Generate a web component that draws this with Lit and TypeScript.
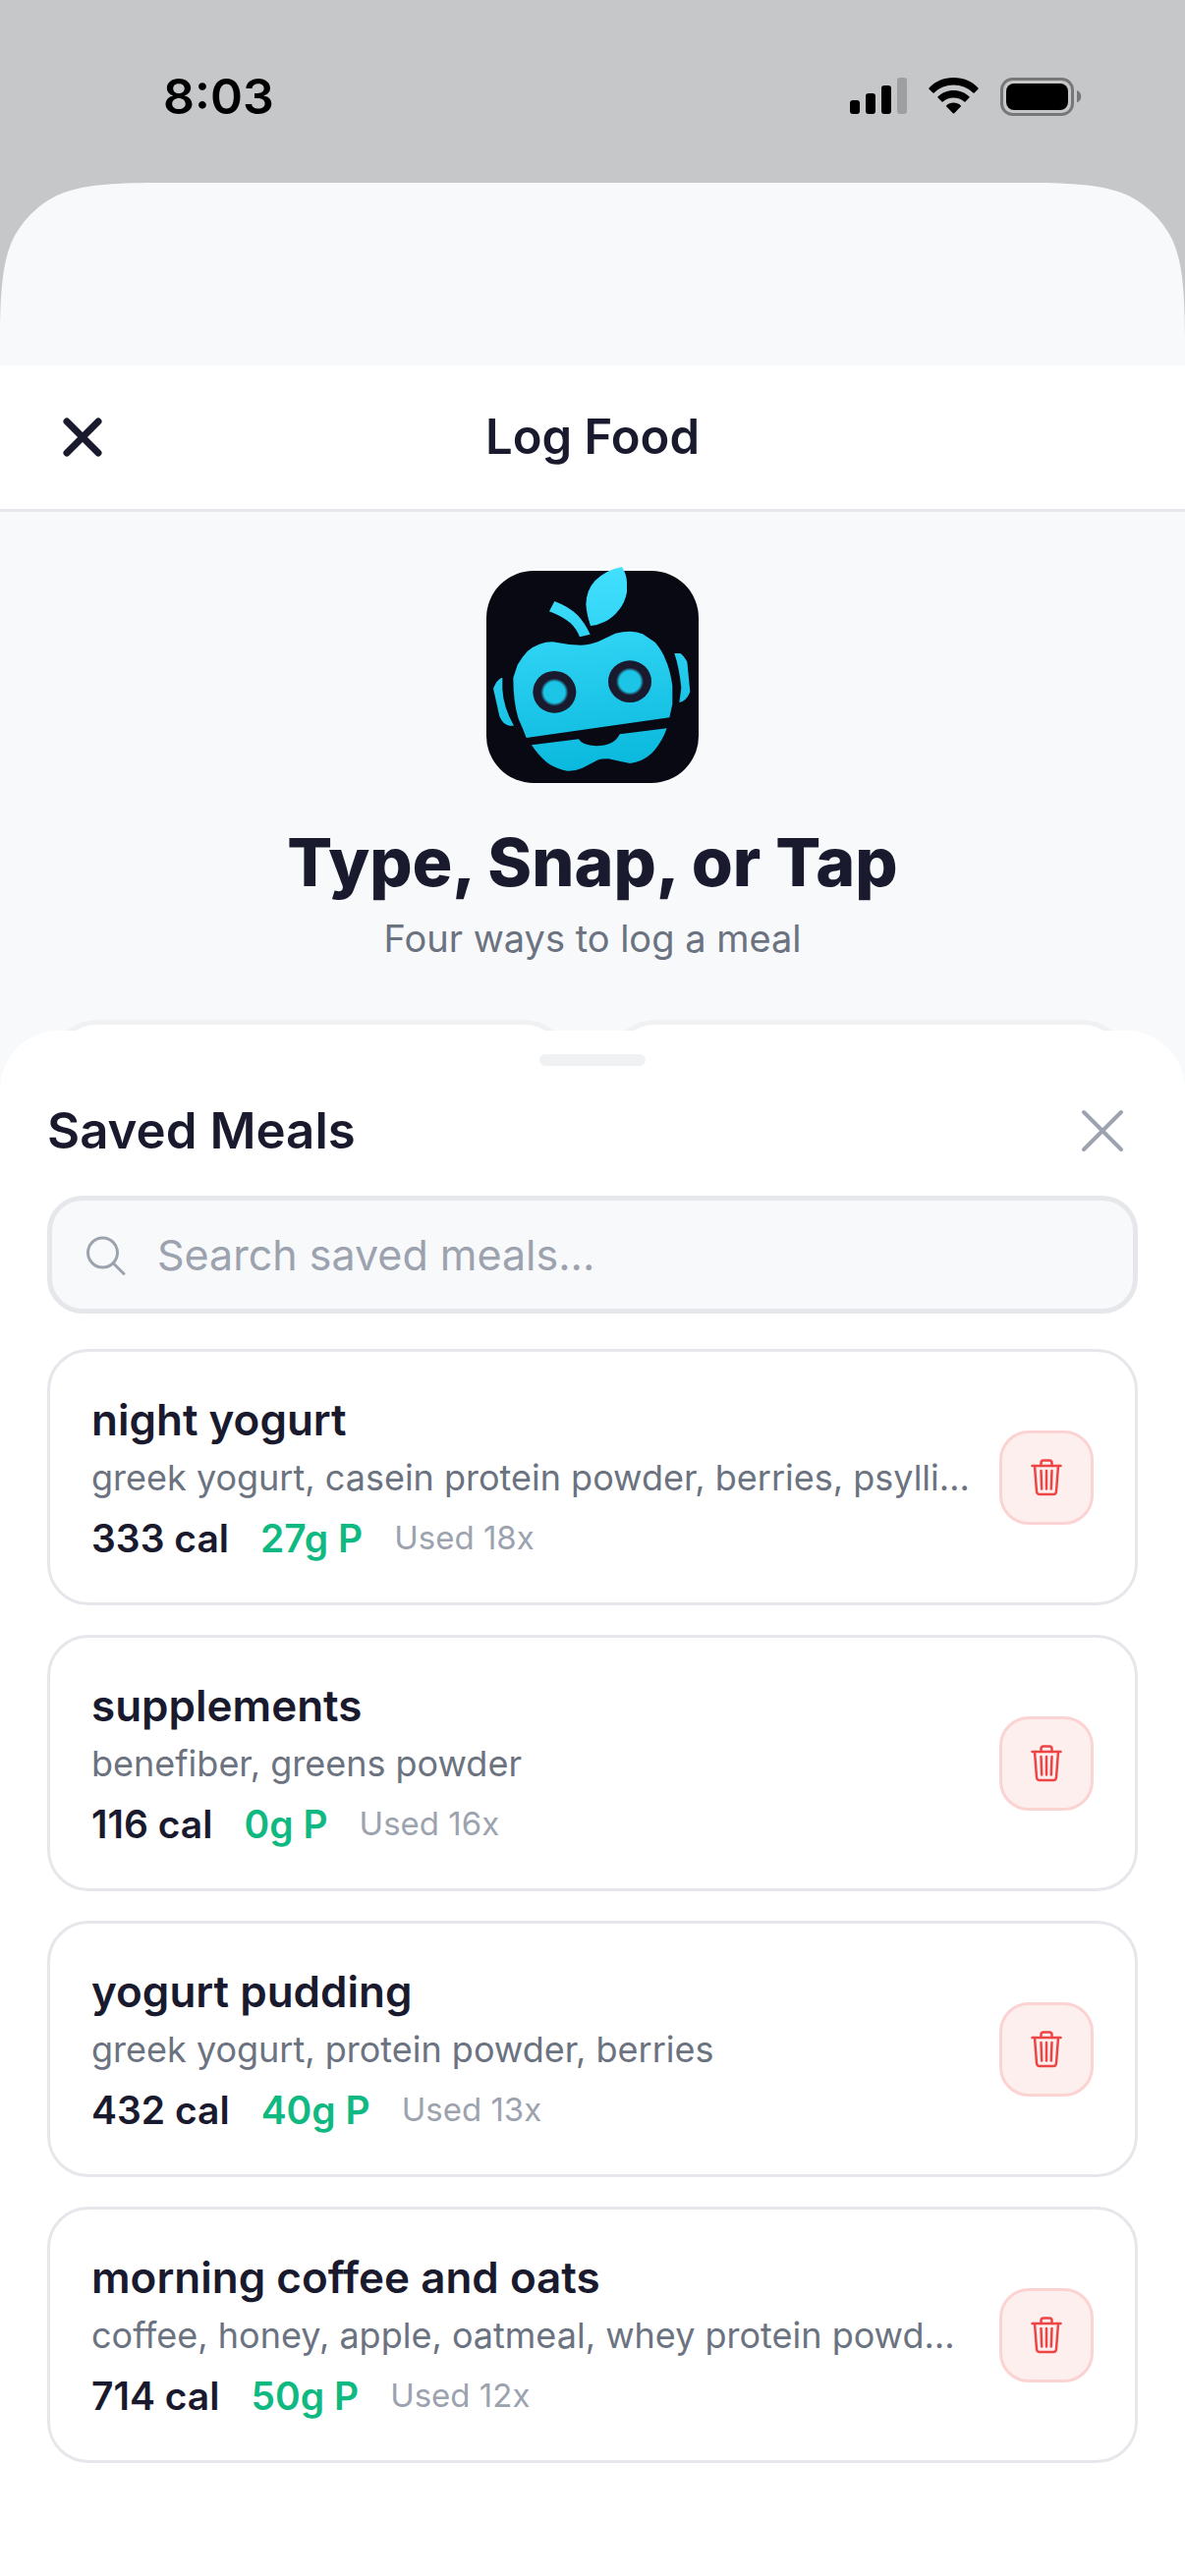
import { LitElement, html, css, svg } from "lit";
import { customElement, property, state } from "lit/decorators.js";

interface Meal {
  name: string;
  ingredients: string;
  calories: number;
  protein: number;
  uses: number;
}

const MEALS: Meal[] = [
  {
    name: "night yogurt",
    ingredients: "greek yogurt, casein protein powder, berries, psylli…",
    calories: 333,
    protein: 27,
    uses: 18,
  },
  { name: "supplements", ingredients: "benefiber, greens powder", calories: 116, protein: 0, uses: 16 },
  { name: "yogurt pudding", ingredients: "greek yogurt, protein powder, berries", calories: 432, protein: 40, uses: 13 },
  {
    name: "morning coffee and oats",
    ingredients: "coffee, honey, apple, oatmeal, whey protein powd…",
    calories: 714,
    protein: 50,
    uses: 12,
  },
];

@customElement("status-bar")
export class StatusBar extends LitElement {
  static styles = css`
    :host {
      display: flex;
      align-items: center;
      justify-content: space-between;
      height: 186px;
      padding: 10px 105px 0 166px;
      box-sizing: border-box;
      color: #000;
    }
    .time {
      font-size: 50px;
      line-height: 60px;
      font-weight: 600;
    }
    .indicators {
      display: flex;
      align-items: center;
      gap: 22px;
    }
    svg {
      display: block;
    }
  `;

  render() {
    return html`
      <span class="time">8:03</span>
      <div class="indicators">
        <svg width="58" height="38" viewBox="0 0 58 38" aria-hidden="true">
          <rect x="0" y="23" width="10" height="14" rx="3" />
          <rect x="16" y="16" width="10" height="21" rx="3" />
          <rect x="32" y="8" width="10" height="29" rx="3" />
          <rect x="48" y="0" width="10" height="37" rx="3" opacity="0.2" />
        </svg>
        <svg width="51" height="38" viewBox="0 0 51 38" aria-hidden="true">
          <path d="M25.500 0C35.500 0 44.500 4 50.500 10.500Q51 11.200 50.400 11.800L46.600 15.600Q46 16 45.400 15.500C40 10.500 33 7.600 25.500 7.600S11 10.500 5.600 15.500Q5 16 4.400 15.600L.6 11.800Q0 11.200.5 10.500C6.500 4 15.500 0 25.500 0Z" />
          <path d="M25.500 13C31.700 13 37.300 15.300 41.500 19.300Q42 20 41.400 20.600L37.500 24.400Q36.900 24.900 36.300 24.400C33.400 21.900 29.600 20.500 25.500 20.500S17.600 21.900 14.700 24.400Q14.100 24.900 13.500 24.400L9.600 20.600Q9 20 9.500 19.300C13.700 15.300 19.300 13 25.500 13Z" />
          <path d="M25.500 25.600C28.300 25.600 30.800 26.500 32.700 28.200Q33.300 28.900 32.700 29.500L26.200 36.200Q25.500 36.900 24.800 36.200L18.300 29.500Q17.700 28.900 18.300 28.200C20.200 26.500 22.700 25.600 25.500 25.600Z" />
        </svg>
        <svg width="83" height="39" viewBox="0 0 83 39" aria-hidden="true">
          <rect x="1.500" y="1.500" width="72" height="36" rx="11" fill="none" stroke="#000" stroke-opacity="0.400" stroke-width="3" />
          <rect x="6" y="6" width="63" height="27" rx="8" />
          <path d="M78 13C81 14.200 82.200 16.500 82.200 19.200S81 24.200 78 25.400Z" opacity="0.400" />
        </svg>
      </div>
    `;
  }
}

@customElement("robot-logo")
export class RobotLogo extends LitElement {
  static styles = css`
    :host {
      display: block;
      width: 216px;
      height: 216px;
    }
    svg {
      display: block;
      width: 100%;
      height: 100%;
      overflow: visible;
    }
  `;

  render() {
    return html`
      <svg viewBox="45 63 648 648" role="img" aria-label="Robot apple logo">
        <defs>
          <linearGradient id="body" gradientUnits="userSpaceOnUse" x1="330" y1="60" x2="400" y2="680">
            <stop offset="0" stop-color="#43e0ff" />
            <stop offset="1" stop-color="#08b8dc" />
          </linearGradient>
          <radialGradient id="eye">
            <stop offset="0.520" stop-color="#1cc5e6" />
            <stop offset="0.680" stop-color="#1a1a2e" />
          </radialGradient>
        </defs>
        <rect x="45" y="63" width="648" height="648" rx="144" fill="#090914" />
        <g fill="url(#body)">
          <path d="M459 51Q474 75 474 100V128Q468 160 450 182Q430 207 407 218Q385 229 363 231Q351 195 349 165Q351 120 377 93Q410 60 459 51Z" />
          <path d="M253 156Q296 172 323 198Q345 221 362 257L330 265Q320 240 302 223Q275 201 237 187Z" />
          <path d="M167 573Q157 545 143 515Q127 465 127 390L140 350Q155 325 170 309Q205 280 247 280Q290 289 335 290Q365 288 387 279L439 254Q460 248 485 248Q505 249 522 256L560 281Q582 307 591 332Q605 360 613 413V470L604 511Z" />
          <path d="M183 595L327 577Q337 596 380 598Q435 598 452 562L596 544Q580 590 548 622Q520 647 484 651Q455 646 418 637Q395 637 384 641L338 665Q315 675 292 674Q265 670 238 654Q210 635 183 595Z" />
          <path d="M92 390Q79 392 66 422L85 507Q95 532 115 536H129Q97 480 94 425V390Z" />
          <path d="M619 315H637Q646 320 658 341L667 433Q655 462 634 465L640 420Q634 360 619 315Z" />
        </g>
        <ellipse cx="253" cy="433" rx="66" ry="64" fill="#1a1a2e" />
        <ellipse cx="483" cy="401" rx="66" ry="64" fill="#1a1a2e" />
        <circle cx="253" cy="434" r="62" fill="url(#eye)" />
        <circle cx="483" cy="401" r="62" fill="url(#eye)" />
      </svg>
    `;
  }
}

@customElement("meal-card")
export class MealCard extends LitElement {
  @property({ attribute: false }) meal!: Meal;

  static styles = css`
    :host {
      display: flex;
      align-items: center;
      gap: 18px;
      padding: 42px;
      border: 3px solid #e5e7eb;
      border-radius: 42px;
      background: #fff;
    }
    .info {
      flex: 1;
      min-width: 0;
    }
    .name {
      margin: 0;
      font-size: 44px;
      line-height: 54px;
      font-weight: 600;
      color: #1a1a2e;
    }
    .ingredients {
      margin: 8px 0 14px;
      font-size: 36px;
      line-height: 48px;
      color: #6b7280;
      white-space: nowrap;
      overflow: hidden;
      text-overflow: ellipsis;
    }
    .stats {
      display: flex;
      align-items: center;
      gap: 32px;
      font-size: 39px;
      line-height: 47px;
      font-weight: 600;
      color: #1a1a2e;
    }
    .protein {
      color: #10b981;
    }
    .uses {
      font-size: 33px;
      font-weight: 400;
      color: #9ca3af;
    }
    .delete {
      display: grid;
      place-items: center;
      flex: none;
      width: 96px;
      height: 96px;
      padding: 0;
      border: 3px solid #fcd3d3;
      border-radius: 30px;
      background: #feefef;
      cursor: pointer;
    }
    svg {
      display: block;
      fill: none;
      stroke: #ef4444;
      stroke-width: 2.500;
      stroke-linecap: round;
      stroke-linejoin: round;
    }
  `;

  render() {
    const { name, ingredients, calories, protein, uses } = this.meal;
    return html`
      <div class="info">
        <h3 class="name">${name}</h3>
        <p class="ingredients">${ingredients}</p>
        <div class="stats">
          <span>${calories} cal</span>
          <span class="protein">${protein}g P</span>
          <span class="uses">Used ${uses}x</span>
        </div>
      </div>
      <button class="delete" type="button" aria-label="Delete ${name}">
        <svg width="42" height="42" viewBox="0 0 42 42" aria-hidden="true">
          <path d="M9 9L11 35Q11.200 38 14 38H28Q30.800 38 31 35L33 9" />
          <path d="M6.500 9H35.500" />
          <path d="M15.500 9V6Q15.500 3.500 18 3.500H24Q26.500 3.500 26.500 6V9" />
          <path d="M21 14V32.500M15.500 14L16.200 32.500M26.500 14L25.800 32.500" />
        </svg>
      </button>
    `;
  }
}

@customElement("app-root")
export class AppRoot extends LitElement {
  @state() private query = "";

  static styles = css`
    :host {
      display: flex;
      flex-direction: column;
      min-height: 100vh;
      background: #c6c7c9;
      color: #1a1a2e;
      font-family: Inter, "Liberation Sans", sans-serif;
    }
    .page {
      display: flex;
      flex-direction: column;
      flex: 1;
      background: #f8f9fb;
    }
    .corners {
      display: flex;
      justify-content: space-between;
      height: 186px;
    }
    .corner {
      display: block;
      width: 158px;
      height: 158px;
      fill: #c6c7c9;
    }
    .header {
      display: grid;
      grid-template-columns: 72px 1fr 72px;
      align-items: center;
      height: 149px;
      padding: 0 48px;
      box-sizing: border-box;
      background: #fff;
      border-bottom: 3px solid #e5e7eb;
    }
    .icon-button {
      display: grid;
      place-items: center;
      width: 72px;
      height: 72px;
      padding: 0;
      border: 0;
      background: none;
      cursor: pointer;
    }
    .icon-button svg {
      display: block;
      fill: none;
      stroke-linecap: round;
    }
    .title {
      margin: 0;
      text-align: center;
      font-size: 49px;
      line-height: 60px;
      font-weight: 600;
    }
    .hero {
      display: flex;
      flex-direction: column;
      align-items: center;
      padding: 60px 48px 0;
    }
    .headline {
      margin: 36px 0 0;
      font-size: 68px;
      line-height: 88px;
      font-weight: 800;
    }
    .tagline {
      margin: 10px 0 0;
      font-size: 38px;
      line-height: 48px;
      color: #6b7280;
    }
    .options {
      display: grid;
      grid-template-columns: 1fr 1fr;
      gap: 38px;
      height: 120px;
      margin: 59px 57px -109px 51px;
    }
    .option {
      border: 5px solid #f0f1f2;
      border-radius: 48px;
      background: #fff;
    }
    .sheet {
      position: relative;
      flex: 1;
      padding: 24px 48px 48px;
      background: #fff;
      border-radius: 60px 60px 0 0;
    }
    .handle {
      width: 108px;
      height: 12px;
      margin: 0 auto;
      border-radius: 6px;
      background: #f0f1f3;
    }
    .sheet-header {
      display: flex;
      align-items: center;
      justify-content: space-between;
      height: 132px;
    }
    .sheet-title {
      margin: 0;
      font-size: 51px;
      line-height: 66px;
      font-weight: 600;
    }
    .search {
      display: flex;
      align-items: center;
      gap: 28px;
      height: 120px;
      padding: 0 36px 0 34px;
      box-sizing: border-box;
      border: 5px solid #e5e7eb;
      border-radius: 36px;
      background: #f8f9fb;
    }
    .search svg {
      flex: none;
      fill: none;
      stroke: #9ca3af;
      stroke-width: 3;
      stroke-linecap: round;
    }
    .search input {
      flex: 1;
      min-width: 0;
      padding: 0;
      border: 0;
      outline: 0;
      background: none;
      font: inherit;
      font-size: 43px;
      line-height: 60px;
      color: #1a1a2e;
    }
    .search input::placeholder {
      color: #9ca3af;
      opacity: 1;
    }
    .meals {
      display: flex;
      flex-direction: column;
      gap: 30px;
      margin: 36px 0 0;
      padding: 0;
      list-style: none;
    }
  `;

  private onSearch(event: Event) {
    this.query = (event.target as HTMLInputElement).value.toLowerCase();
  }

  private cross(inset: number, width: number, color: string) {
    const far = 60 - inset;
    return html`<svg width="60" height="60" viewBox="0 0 60 60" aria-hidden="true">
      ${svg`<path d="M${inset} ${inset}L${far} ${far}M${far} ${inset}L${inset} ${far}" stroke=${color} stroke-width=${width} />`}
    </svg>`;
  }

  render() {
    const meals = MEALS.filter((meal) => meal.name.includes(this.query));
    return html`
      <status-bar></status-bar>
      <main class="page">
        <div class="corners">
          <svg class="corner" viewBox="0 0 158 158" aria-hidden="true">
            <path d="M0 0V158C0 112 3 86 9 68C17 42 42 17 68 9C86 3 112 0 158 0Z" />
          </svg>
          <svg class="corner" viewBox="0 0 158 158" aria-hidden="true">
            <path d="M158 0V158C158 112 155 86 149 68C141 42 116 17 90 9C72 3 46 0 0 0Z" />
          </svg>
        </div>
        <header class="header">
          <button class="icon-button" type="button" aria-label="Close">${this.cross(14, 7, "#1a1a2e")}</button>
          <h1 class="title">Log Food</h1>
        </header>
        <section class="hero">
          <robot-logo></robot-logo>
          <h2 class="headline">Type, Snap, or Tap</h2>
          <p class="tagline">Four ways to log a meal</p>
        </section>
        <div class="options">
          <div class="option"></div>
          <div class="option"></div>
        </div>
        <section class="sheet">
          <div class="handle"></div>
          <div class="sheet-header">
            <h2 class="sheet-title">Saved Meals</h2>
            <button class="icon-button" type="button" aria-label="Close saved meals">${this.cross(11, 4, "#9ca3af")}</button>
          </div>
          <label class="search">
            <svg width="45" height="45" viewBox="0 0 45 45" aria-hidden="true">
              <circle cx="17.500" cy="20" r="15" />
              <path d="M28.500 31L39 41.500" />
            </svg>
            <input type="text" placeholder="Search saved meals..." aria-label="Search saved meals" @input=${this.onSearch} />
          </label>
          <ul class="meals">
            ${meals.map((meal) => html`<li><meal-card .meal=${meal}></meal-card></li>`)}
          </ul>
        </section>
      </main>
    `;
  }
}
